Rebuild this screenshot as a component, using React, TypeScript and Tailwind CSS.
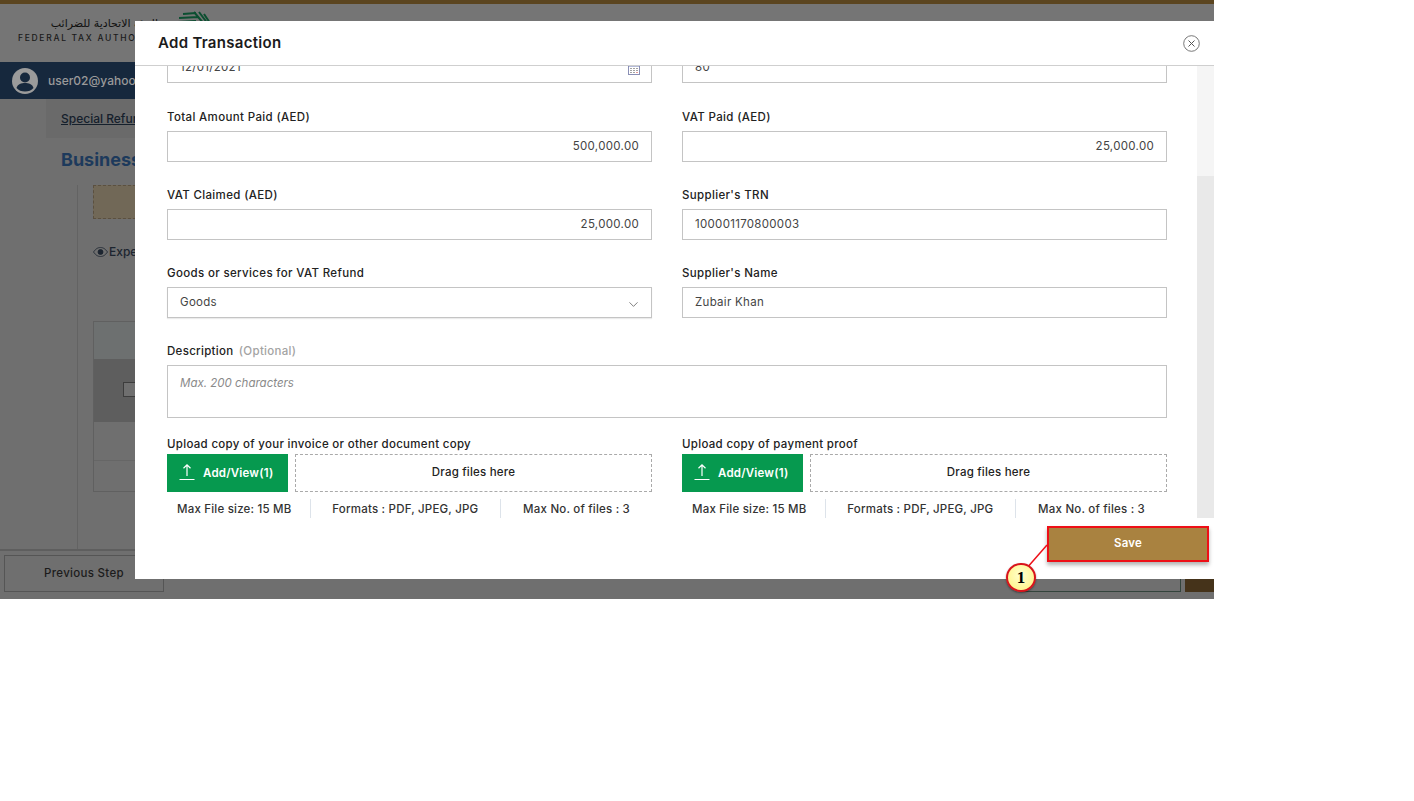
import React from 'react';
import { ChevronDown } from 'lucide-react';

const font = { fontFamily: 'Inter, "Noto Sans", sans-serif' };

const Field = ({ label, value, right }: { label: string; value: string; right?: boolean }) => (
  <div className="flex flex-col">
    <label className="h-[14px] mb-[7px] text-[11.5px] leading-[14px] font-medium text-[#222] tracking-[0.35px]">{label}</label>
    <div className={`h-[31px] border border-[#c4c4c4] px-3 flex items-center text-[11.5px] tracking-[0.3px] text-[#444] ${right ? 'justify-end' : ''}`}>
      {value}
    </div>
  </div>
);

const Upload = ({ label }: { label: string }) => (
  <div className="flex flex-col">
    <label className="h-[14px] mb-[3px] text-[11.5px] leading-[14px] font-medium text-[#222] tracking-[0.3px]">{label}</label>
    <div className="flex gap-[7px] h-[38px]">
      <button className="w-[121px] bg-[#06994f] text-white flex items-center pl-3 text-[11.5px] font-semibold tracking-[0.2px]">
        <svg width="16" height="18" viewBox="0 0 16 18" fill="none" stroke="white" strokeWidth="1.2" className="mr-[8px] -mt-[3px]">
          <path d="M8 13V2M4.5 5.2 8 1.8l3.500 3.400M0.500 16.500h15" />
        </svg>
        <span className="mt-[2px]">Add/View(1)</span>
      </button>
      <div className="flex-1 border border-dashed border-[#aaa] flex items-center justify-center text-[11.5px] font-medium text-[#222] tracking-[0.2px]">
        Drag files here
      </div>
    </div>
    <div className="flex mt-[7px] h-[21px] items-center text-[11.5px] font-medium text-[#333] tracking-[0.2px] whitespace-nowrap">
      <div className="w-[148px] pl-[10px] h-full flex items-center border-r border-[#dde3ea]">Max File size: 15 MB</div>
      <div className="w-[197px] h-full flex items-center justify-center border-r border-[#dde3ea]">Formats : PDF, JPEG, JPG</div>
      <div className="w-[156px] h-full flex items-center justify-center">Max No. of files : 3</div>
    </div>
  </div>
);

const Background = () => (
  <div className="h-full flex flex-col bg-[#6f6f6f]">
    <div className="h-[4px] bg-[#5b4520]" />
    <div className="h-[58px] px-[18px] pt-[13px] flex gap-6 bg-[#757575]">
      <div className="w-[140px]">
        <div dir="rtl" className="text-[11px] leading-[14px] text-[#111] whitespace-nowrap" style={{ fontFamily: '"DejaVu Sans", sans-serif' }}>الهيئة الاتحادية للضرائب</div>
        <div className="text-[8.500px] leading-[12px] mt-[1px] font-medium tracking-[1.7px] text-[#1a1a1a] whitespace-nowrap">FEDERAL TAX AUTHORITY</div>
      </div>
      <svg width="40" height="16" viewBox="0 0 40 16" fill="none" stroke="#0c4f31" strokeWidth="2" className="-mt-[6px] -ml-[6px]">
        <path d="M2 11 20 10M3 7 22 6M7 3 20 2M18 1 28 13M23 1 32 13M28 3 34 12" />
      </svg>
    </div>
    <div className="h-[37px] bg-[#16283d] flex items-center pl-[11px] gap-[9px] text-[12px] font-medium text-[#9a9a9a]">
      <svg width="28" height="28" viewBox="0 0 28 28">
        <circle cx="14" cy="14" r="13" fill="#9b9b9b" />
        <circle cx="14" cy="10.500" r="5" fill="#16283d" />
        <path d="M5.500 21c1-4 5-5 8.500-5s7.500 1 8.500 5c-2 2.500-5 3.500-8.500 3.500S7.500 23.500 5.500 21z" fill="#16283d" />
      </svg>
      user02@yahoo.com
    </div>
    <div className="ml-[46px] h-[39px] bg-[#6a6a6a] flex items-center pl-[15px] text-[12px] font-medium text-[#15202c] underline">Special Refund</div>
    <div className="ml-[61px] mt-[10px] text-[18px] leading-[24px] font-bold text-[#1d3a5c]">Business</div>
    <div className="flex-1 ml-[77px] mt-[13px] flex border-l border-[#636363]">
      <div className="ml-[15px] flex-1 flex flex-col">
        <div className="h-[34px] border border-dashed border-[#5b5040] bg-[#716857]" />
        <div className="mt-[24px] h-[18px] flex items-center gap-[1px] text-[12px] font-medium text-[#1c2530]">
          <svg width="15" height="10" viewBox="0 0 15 10" fill="none" stroke="#1c2530" strokeWidth="0.8">
            <path d="M0.500 5C3 1.500 5 .5 7.500 .5S12 1.500 14.500 5C12 8.500 10 9.500 7.500 9.500S3 8.500 .5 5z" />
            <circle cx="7.500" cy="5" r="2.500" fill="#1c2530" />
          </svg>
          Expected
        </div>
        <div className="mt-[60px] w-[200px] border border-[#606060] flex flex-col h-[171px]">
          <div className="h-[37px] bg-[#6d7070]" />
          <div className="h-[63px] bg-[#5e5e5e] pl-[29px] pt-[23px]">
            <div className="w-[16px] h-[15px] border border-[#3d3d3d] bg-[#6f6f6f]" />
          </div>
          <div className="h-[39px] border-b border-[#666]" />
        </div>
      </div>
    </div>
    <div className="h-[50px] border-t-2 border-[#5e5e5e] pl-[4px] pt-[4px] flex items-start">
      <button className="w-[160px] h-[37px] border border-[#555] text-[11.500px] font-medium text-[#1c1c1c] tracking-[0.3px]">Previous Step</button>
      <div className="ml-auto w-[160px] mr-[33px] h-[37px] border border-[#34443c]" />
      <div className="w-[29px] h-[37px] -ml-[0px] bg-[#45331a] absolute right-0" />
    </div>
  </div>
);

const Modal = () => (
  <div className="absolute left-[135px] top-[21px] w-[1079px] h-[558px] bg-white flex flex-col">
    <div className="h-[45px] shrink-0 border-b border-[#cfcfcf] flex items-center justify-between pl-[23px] pr-[14px] relative z-10 bg-white">
      <h2 className="text-[15px] font-semibold text-[#1b1b1b] tracking-[0.3px]">Add Transaction</h2>
      <svg width="17" height="17" viewBox="0 0 17 17" fill="none" stroke="#555" strokeWidth="0.8">
        <circle cx="8.500" cy="8.500" r="7.800" />
        <path d="M5.500 5.500l6 6M11.500 5.500l-6 6" strokeWidth="1" />
      </svg>
    </div>
    <div className="h-[452px] shrink-0 flex overflow-hidden">
      <div className="flex-1 pl-[32px] pr-[30px]">
        <div className="grid grid-cols-2 gap-x-[30px] -mt-[13px]">
          <div className="h-[30px] border border-[#c4c4c4] px-3 flex items-center justify-between text-[11.5px] tracking-[0.3px] text-[#444]">
            12/01/2021
            <svg width="12" height="11" viewBox="0 0 12 11" className="-mr-[1px] mt-[3px]">
              <rect x="0.500" y="0.500" width="11" height="10" fill="white" stroke="#8a8fb5" />
              <rect x="0.500" y="0.500" width="11" height="2" fill="#6a78b5" />
              <path d="M2.500 4.500h1M5.500 4.500h1M8.500 4.500h1M2.500 6.500h1M5.500 6.500h1M8.500 6.500h1M2.500 8.500h1M5.500 8.500h1" stroke="#444" />
              <path d="M8.500 8.500h1" stroke="#c33" />
            </svg>
          </div>
          <div className="h-[30px] border border-[#c4c4c4] px-3 flex items-center text-[11.5px] tracking-[0.3px] text-[#444]">80</div>
        </div>
        <div className="grid grid-cols-2 gap-x-[30px] gap-y-[26px] mt-[27px]">
          <Field label="Total Amount Paid (AED)" value="500,000.00" right />
          <Field label="VAT Paid (AED)" value="25,000.00" right />
          <Field label="VAT Claimed (AED)" value="25,000.00" right />
          <Field label="Supplier's TRN" value="100001170800003" />
          <div className="flex flex-col">
            <label className="h-[14px] mb-[7px] text-[11.5px] leading-[14px] font-medium text-[#222] tracking-[0.35px]">Goods or services for VAT Refund</label>
            <div className="h-[31px] border border-[#c4c4c4] pl-3 pr-[10px] flex items-center justify-between text-[11.5px] tracking-[0.3px] text-[#444] shadow-[0_1px_1px_rgba(0,0,0,0.08)]">
              Goods
              <ChevronDown size={15} strokeWidth={1} color="#333" className="mt-[3px]" />
            </div>
          </div>
          <Field label="Supplier's Name" value="Zubair Khan" />
        </div>
        <div className="mt-[26px]">
          <label className="block h-[14px] mb-[7px] text-[11.5px] leading-[14px] font-medium text-[#222] tracking-[0.3px]">
            Description <span className="text-[#a3a3a3] ml-[2px]">(Optional)</span>
          </label>
          <div className="h-[53px] border border-[#c4c4c4] px-3 pt-[10px] text-[11.5px] leading-[14px] italic text-[#8a8a8a]">Max. 200 characters</div>
        </div>
        <div className="grid grid-cols-2 gap-x-[30px] mt-[19px]">
          <Upload label="Upload copy of your invoice or other document copy" />
          <Upload label="Upload copy of payment proof" />
        </div>
      </div>
      <div className="w-[17px] shrink-0 flex flex-col">
        <div className="h-[110px] bg-[#f5f5f5]" />
        <div className="flex-1 bg-[#e9e9e9]" />
      </div>
    </div>
    <div className="flex-1 flex justify-end pt-[8px] pr-[5px] items-start">
      <button className="w-[162px] h-[36px] bg-[#a98240] border-2 border-[#ee0f17] text-white text-[11.5px] font-semibold tracking-[0.2px] shadow-[0_3px_4px_rgba(0,0,0,0.3)]">
        Save
      </button>
    </div>
  </div>
);

const Callout = () => (
  <>
    <svg width="30" height="34" viewBox="0 0 30 34" fill="none" className="absolute left-[1020px] top-[541px]">
      <path d="M27 4 6 28" stroke="#ee0f17" strokeWidth="1.500" />
    </svg>
    <div
      className="absolute left-[1006px] top-[563px] w-[30px] h-[29px] rounded-full border-2 border-[#d8141c] bg-[radial-gradient(circle_at_50%_40%,#ffffd0,#fff27a)] flex items-center justify-center text-[17px] font-bold text-black shadow-[0_1px_2px_rgba(0,0,0,0.4)]"
      style={{ fontFamily: '"Liberation Serif", serif' }}
    >
      1
    </div>
  </>
);

export default function App() {
  return (
    <div className="w-[1414px] h-[801px] bg-white overflow-hidden" style={font}>
      <div className="relative w-[1214px] h-[599px] overflow-hidden">
        <Background />
        <Modal />
        <Callout />
      </div>
    </div>
  );
}
